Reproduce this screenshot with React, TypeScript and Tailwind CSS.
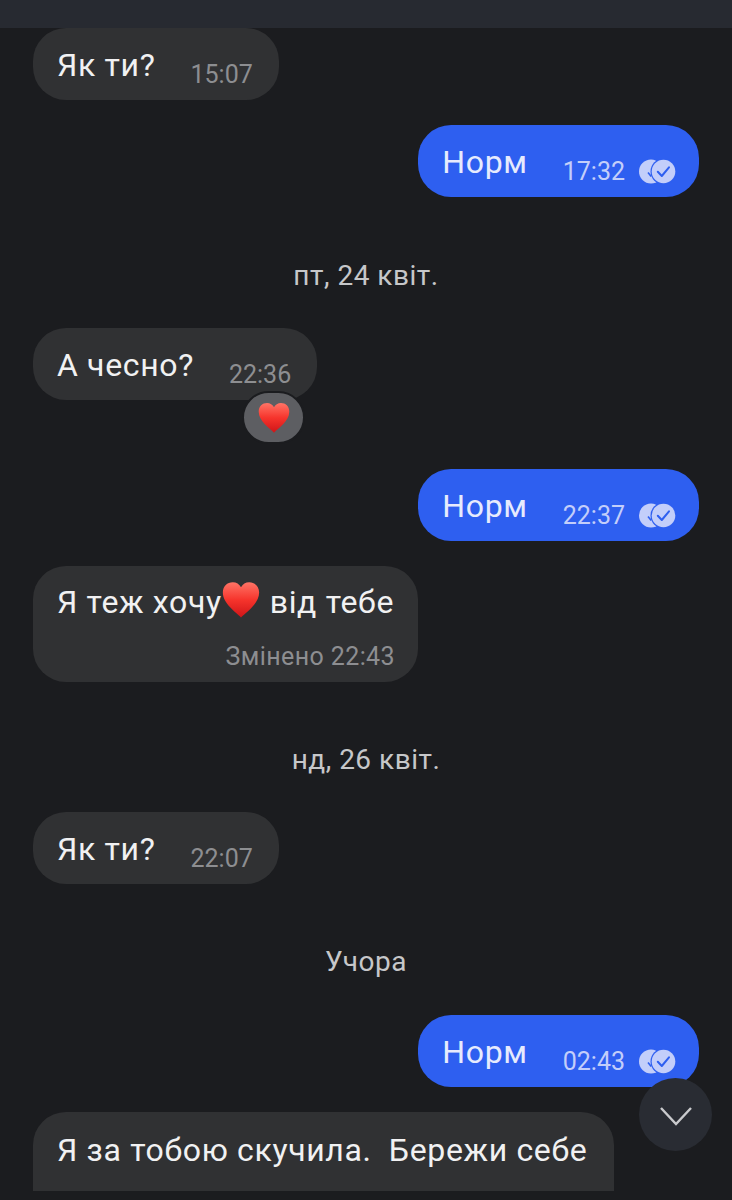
const font = { fontFamily: "Roboto, sans-serif" };

function DoubleCheck() {
  return (
    <svg width="37" height="25" viewBox="0 0 37 25" className="ml-[14px] shrink-0">
      <circle cx="12" cy="12.5" r="12" fill="#c3cefa" />
      <path d="M9 13.5l3.2 4" stroke="#2e5ff0" strokeWidth="1.6" fill="none" />
      <circle cx="24.5" cy="12.5" r="13" fill="#2e5ff0" />
      <circle cx="24.5" cy="12.5" r="11.8" fill="#c3cefa" />
      <path d="M18.8 12.7l4 4.3 7.2-8.7" stroke="#2e5ff0" strokeWidth="2" fill="none" strokeLinecap="round" strokeLinejoin="round" />
    </svg>
  );
}

function Heart({ size, id, className = "" }: { size: number; id: string; className?: string }) {
  return (
    <svg width={size} height={size} viewBox="0 0 36 36" className={`shrink-0 ${className}`}>
      <defs>
        <linearGradient id={id} x1="0" y1="0" x2="0" y2="1">
          <stop offset="0" stopColor="#ff7466" />
          <stop offset="0.5" stopColor="#f6342c" />
          <stop offset="1" stopColor="#cf1518" />
        </linearGradient>
      </defs>
      <path d="M18 34.500C13 29.500 .8 21.500 .8 11C.8 5 5 1.200 10.200 1.200C13.600 1.200 16.500 3 18 6C19.500 3 22.400 1.200 25.800 1.200C31 1.200 35.200 5 35.200 11C35.200 21.500 23 29.500 18 34.500z" fill={`url(#${id})`} />
    </svg>
  );
}

function Incoming({ text, time, className = "" }: { text: string; time: string; className?: string }) {
  return (
    <div className={`self-start flex items-start h-[72px] bg-[#303133] rounded-[33px] pl-6 pr-[26px] pt-[17px] ${className}`}>
      <span className="text-[32px] leading-[40px] text-[#f1f1f2] tracking-[0.65px] whitespace-nowrap">{text}</span>
      <span className="ml-[35px] mt-[13px] text-[25px] leading-[34px] text-[#8d8e91] whitespace-nowrap">{time}</span>
    </div>
  );
}

function Outgoing({ time, className = "" }: { time: string; className?: string }) {
  return (
    <div className={`self-end flex items-start h-[72px] bg-[#2e5ff0] rounded-[33px] pl-6 pr-[23px] pt-[17px] ${className}`}>
      <span className="text-[32px] leading-[40px] text-[#e6ebfd] tracking-[0.65px]">Норм</span>
      <span className="ml-[35px] mt-[13px] text-[25px] leading-[34px] text-[#c3cefa] whitespace-nowrap">{time}</span>
      <div className="mt-[17px]"><DoubleCheck /></div>
    </div>
  );
}

function DateLabel({ text, className = "" }: { text: string; className?: string }) {
  return <div className={`self-center text-[28px] leading-[36px] text-[#c6c7c9] tracking-[0.5px] ${className}`}>{text}</div>;
}

export default function App() {
  return (
    <div className="relative w-[732px] h-[1200px] overflow-hidden bg-[#1b1c1f] flex flex-col" style={font}>
      <div className="h-[28px] shrink-0 bg-[#272a31]" />
      <div className="flex flex-col px-[33px]">
        <Incoming text="Як ти?" time="15:07" />
        <Outgoing time="17:32" className="mt-[25px]" />
        <DateLabel text="пт, 24 квіт." className="mt-[61px]" />
        <div className="relative self-start mt-[34px]">
          <Incoming text="А чесно?" time="22:36" />
          <div className="absolute left-[209px] top-[63px] w-[59px] h-[49px] rounded-full bg-[#5d5e62] border-2 border-[#1b1c1f] box-content flex items-center justify-center">
            <Heart size={32} id="heartA" />
          </div>
        </div>
        <Outgoing time="22:37" className="mt-[69px]" />
        <div className="self-start mt-[25px] h-[116px] w-[385px] bg-[#303133] rounded-[33px] pl-6 pr-[23px] pt-[16px] flex flex-col">
          <div className="flex items-center text-[32px] leading-[40px] text-[#f1f1f2] tracking-[0.65px] whitespace-nowrap">
            <span>Я теж хочу</span>
            <Heart size={38} id="heartB" className="-mt-[4px]" />
            <span className="ml-[10px]">від тебе</span>
          </div>
          <div className="self-end mt-[18px] text-[25px] leading-[34px] text-[#8d8e91] tracking-[0.4px] whitespace-nowrap">Змінено 22:43</div>
        </div>
        <DateLabel text="нд, 26 квіт." className="mt-[60px]" />
        <Incoming text="Як ти?" time="22:07" className="mt-[34px]" />
        <DateLabel text="Учора" className="mt-[60px]" />
        <Outgoing time="02:43" className="mt-[35px]" />
        <div className="self-start mt-[25px] w-[581px] h-[79px] bg-[#303133] rounded-t-[33px] pl-6 pt-[18px] text-[32px] leading-[40px] text-[#f1f1f2] tracking-[0.65px] whitespace-pre">
          Я за тобою скучила.  Бережи себе
        </div>
      </div>
      <button className="absolute left-[639px] top-[1078px] w-[73px] h-[73px] rounded-full bg-[#292c33] flex items-center justify-center">
        <svg width="36" height="24" viewBox="0 0 36 24" fill="none">
          <path d="M3 5l15 16L33 5" stroke="#c9cacd" strokeWidth="2.4" />
        </svg>
      </button>
    </div>
  );
}
